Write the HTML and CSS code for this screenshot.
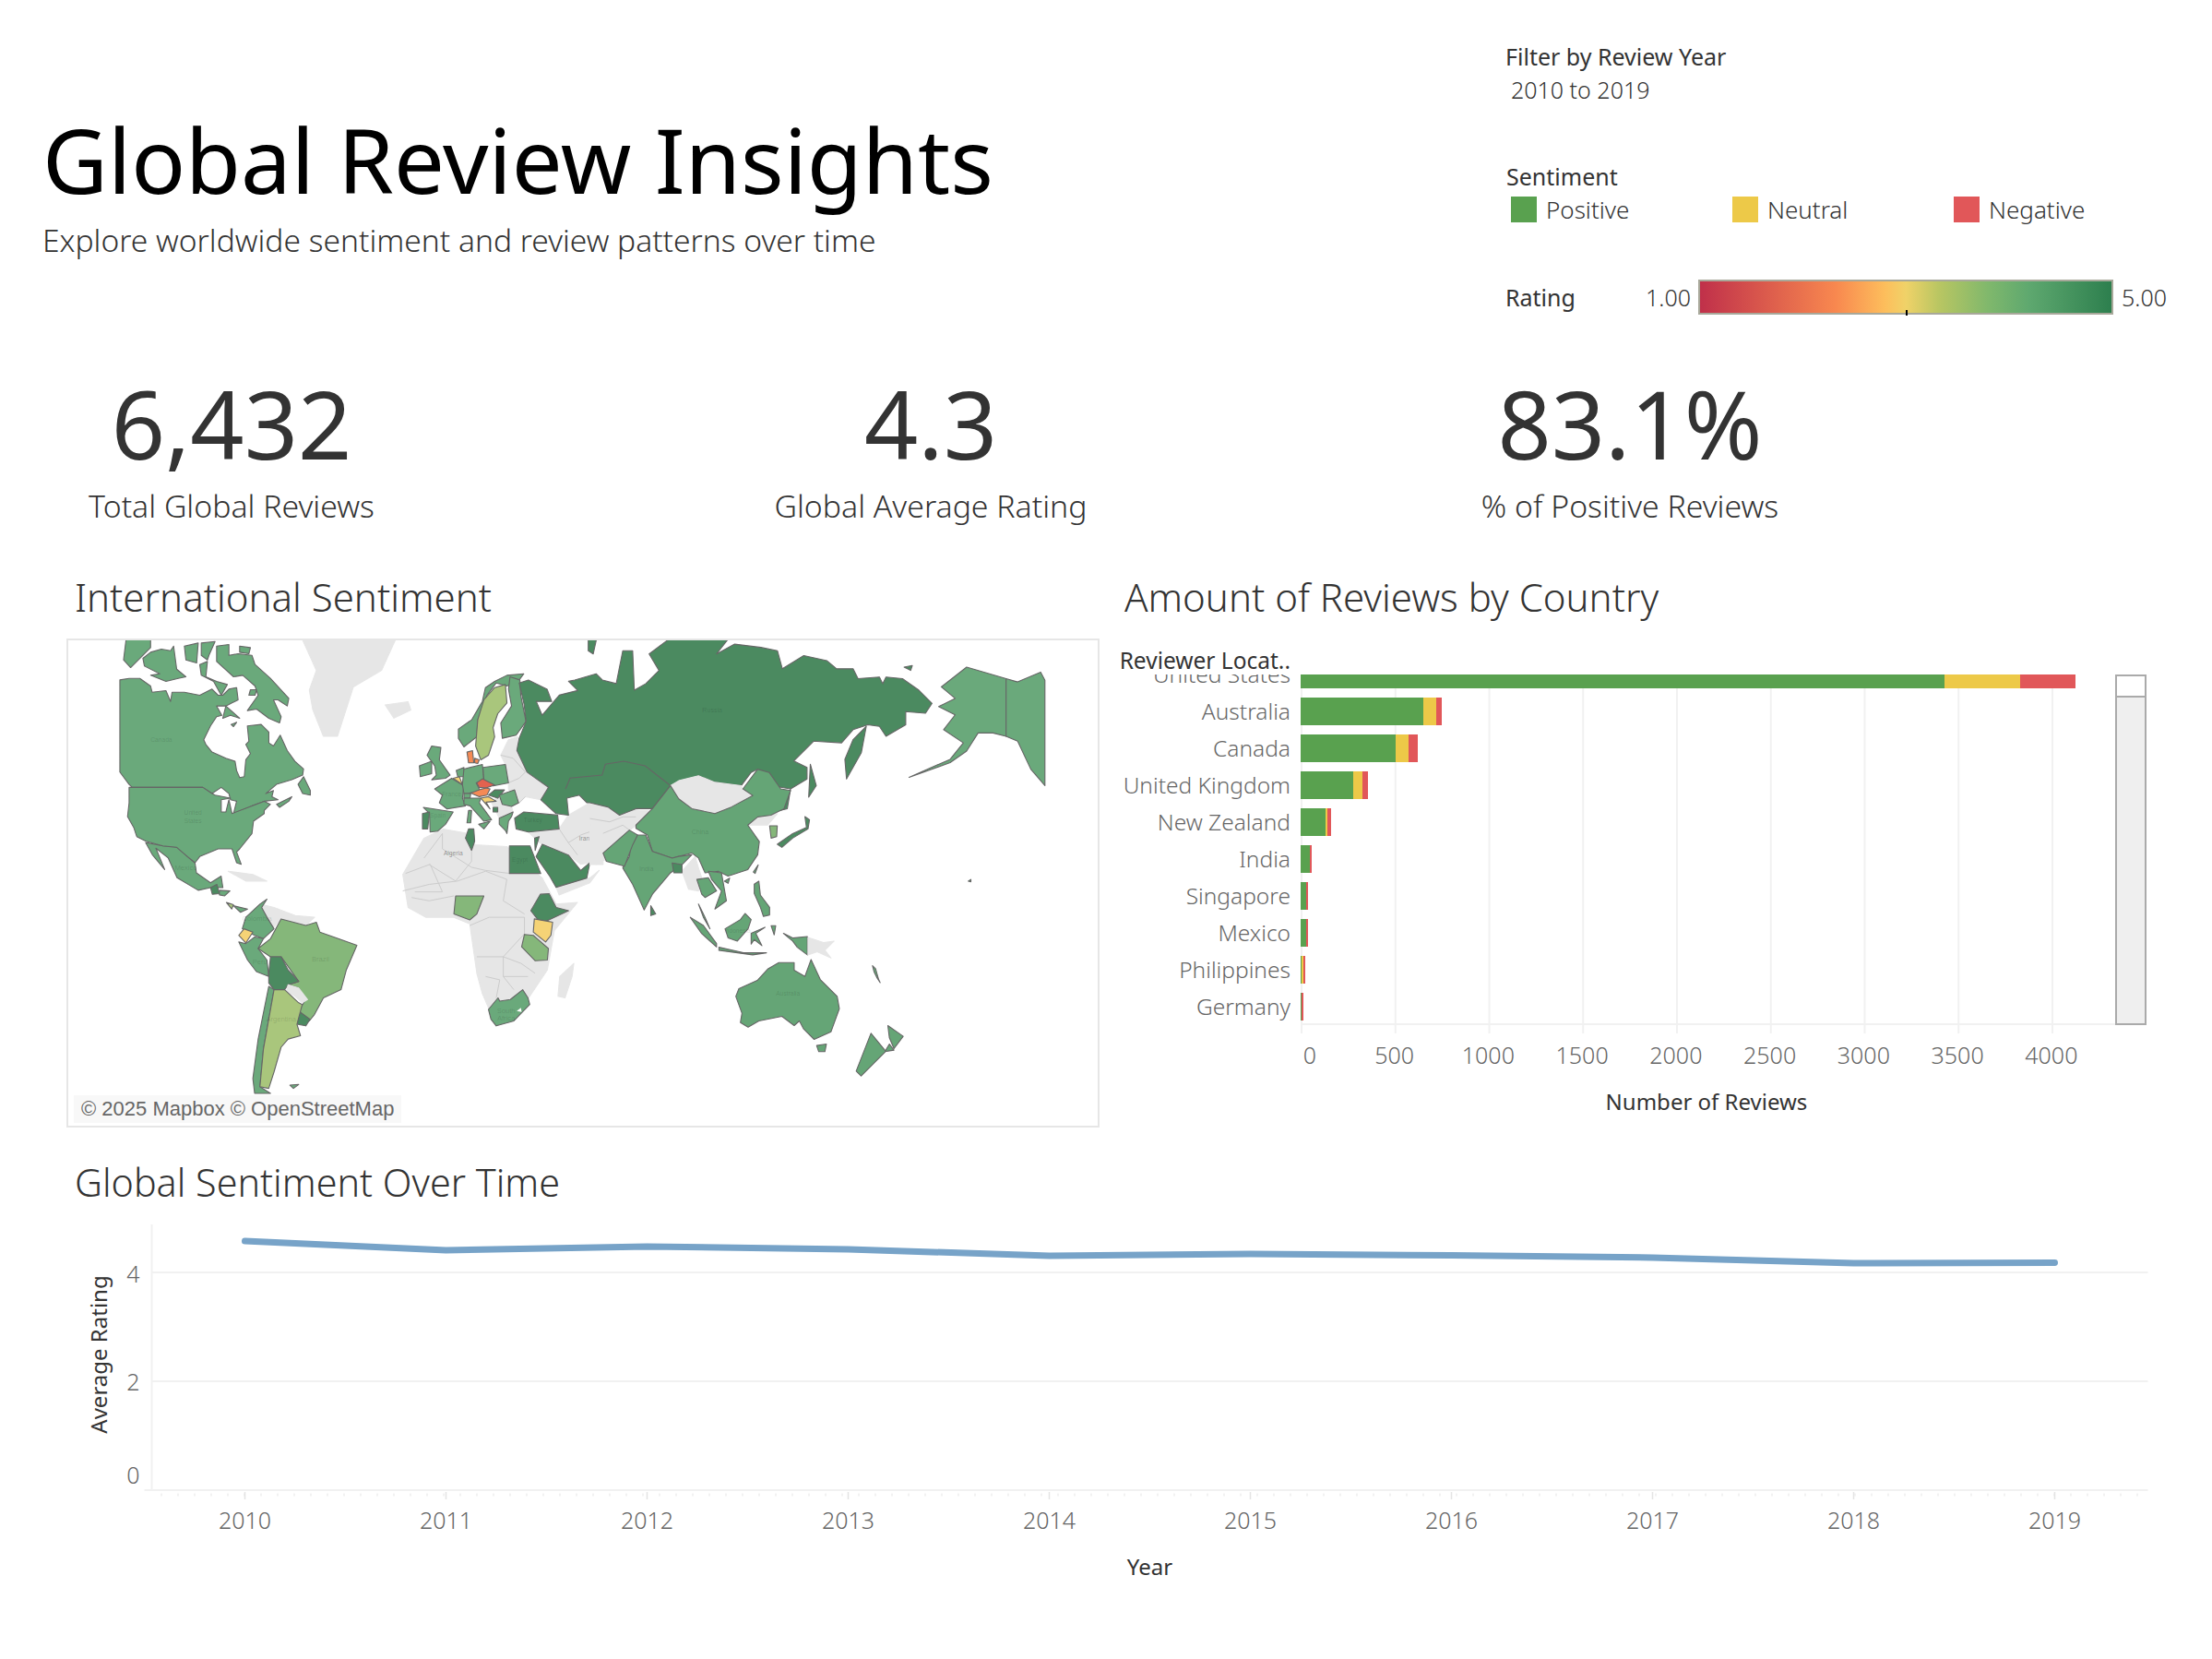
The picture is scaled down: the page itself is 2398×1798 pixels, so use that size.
FILE: index.html

```html
<!DOCTYPE html>
<html lang="en">
<head>
    <meta charset="UTF-8">
    <title>Global Review Insights</title>
    <link rel="stylesheet" href="styles.css">
</head>
<body>
<div class="dashboard">

    <header class="top">
        <div class="heading">
            <h1>Global Review Insights</h1>
            <p class="subtitle">Explore worldwide sentiment and review patterns over time</p>
        </div>
        <div class="filters">
            <div class="filter-title">Filter by Review Year</div>
            <div class="filter-value">2010 to 2019</div>
            <div class="filter-title legend-title">Sentiment</div>
            <div class="legend">
                <div class="legend-item"><span class="swatch pos"></span>Positive</div>
                <div class="legend-item"><span class="swatch neu"></span>Neutral</div>
                <div class="legend-item"><span class="swatch neg"></span>Negative</div>
            </div>
            <div class="rating">
                <div class="filter-title rating-label">Rating</div>
                <div class="rating-min">1.00</div>
                <div class="rating-bar"><span class="rating-tick"></span></div>
                <div class="rating-max">5.00</div>
            </div>
        </div>
    </header>

    <section class="kpis">
        <div class="kpi"><div class="kpi-value">6,432</div><div class="kpi-label">Total Global Reviews</div></div>
        <div class="kpi"><div class="kpi-value">4.3</div><div class="kpi-label">Global Average Rating</div></div>
        <div class="kpi"><div class="kpi-value">83.1%</div><div class="kpi-label">% of Positive Reviews</div></div>
    </section>

    <section class="middle">
        <div class="map-panel">
            <h2>International Sentiment</h2>
            <div class="map-frame">
                <svg class="map" viewBox="74 694 1117 526">
                    <!-- americas, africa -->
                    <g transform="matrix(.3827 0 0 .357 60 680)">
                        <polygon class="grey" points="700,35 965,35 925,130 845,180 800,330 760,330 730,250 720,190 740,130"/>
                        <polygon class="grey" points="935,235 1000,225 1008,250 960,275"/>
                        <polygon class="grey" points="985,750 1045,640 1100,612 1170,625 1190,660 1280,665 1380,760 1420,840 1480,835 1415,920 1395,1040 1345,1120 1320,1160 1230,1160 1210,1110 1195,1050 1175,900 1130,880 1050,880 1000,850"/>
                        <polygon class="grey" points="1425,1120 1430,1060 1470,1020 1465,1060 1445,1125"/>
                        <polygon class="grey" points="580,840 620,850 680,875 735,880 710,905 640,885 615,915 600,880"/>
                        <polygon class="grey" points="490,740 560,750 600,770 540,770"/>
                        <polyline class="line-grey" points="985,800 1060,780 1140,770 1220,740 1280,765 1270,830 1330,870"/>
                        <polyline class="line-grey" points="1060,720 1135,770 1180,710 1180,680"/>
                        <polyline class="line-grey" points="1010,820 1060,830 1130,815"/>
                        <polyline class="line-grey" points="1175,905 1230,880 1330,880 1330,930 1270,1000 1270,1060 1340,1060"/>
                        <polyline class="line-grey" points="1195,1000 1270,1000 1320,1020 1360,1050"/>
                        <polyline class="line-grey" points="1220,1060 1260,1070 1250,1125"/>
                        <polyline class="line-grey" points="1270,1060 1300,1100"/>

                        <polygon class="mid" points="256,653 305,663 344,666 374,695 396,715 400,745 440,775 470,755 475,790 440,790 405,798 345,760 320,700 285,670 310,735 275,690"/>
                        <polygon class="dark" points="440,790 458,780 465,808 445,810"/>
                        <polygon class="mid" points="465,798 495,800 480,815 465,812"/>
                        <polygon class="light" points="485,835 505,842 500,855"/>
                        <polygon class="mid" points="505,845 545,855 525,865"/>

                        <polygon class="mid" points="600,825 580,840 540,880 530,915 565,935 590,945 620,915 600,880 585,850"/>
                        <polygon class="yellow" points="520,935 535,915 560,925 540,958"/>
                        <polygon class="mid" points="520,955 540,960 565,940 590,945 575,975 600,1010 605,1060 570,1045 545,1010"/>
                        <polygon class="sa" points="575,975 610,945 640,885 710,905 740,895 750,925 855,965 825,1040 810,1100 760,1125 735,1175 720,1195 690,1165 710,1130 690,1095 660,1085 690,1075 640,1000 610,1000"/>
                        <polygon class="dark" points="610,1000 640,1000 660,1040 690,1075 660,1085 650,1100 620,1100 605,1080 605,1050"/>
                        <polygon class="grey" points="660,1085 690,1095 715,1130 700,1140 680,1120 655,1105"/>
                        <polygon class="dark" points="690,1165 722,1190 710,1210 685,1205"/>
                        <polygon class="mid" points="605,1090 620,1100 590,1280 580,1395 610,1415 565,1415 560,1370 575,1250"/>
                        <polygon class="light" points="620,1100 650,1100 690,1140 700,1145 685,1205 695,1240 660,1250 640,1275 620,1350 605,1400 580,1395 590,1280"/>
                        <polygon class="mid" points="665,1390 690,1388 675,1400"/>

                        <polygon class="sa" points="1135,815 1215,815 1195,870 1175,888 1130,870"/>
                        <polygon class="dark" points="1348,860 1375,810 1400,808 1420,850 1455,860 1395,890 1370,890"/>
                        <polygon class="yellow" points="1358,885 1395,892 1410,895 1405,935 1390,955 1355,925"/>
                        <polygon class="sa" points="1330,932 1355,935 1398,975 1395,1010 1360,1012 1322,970"/>
                        <polygon class="mid" points="1228,1160 1255,1125 1260,1135 1290,1130 1325,1100 1340,1125 1345,1145 1300,1195 1250,1210 1235,1190"/>
                        <polygon class="blank" points="1308,1165 1320,1155 1322,1168"/>

                        <text class="map-label" x="370" y="738">Mexico</text>
                        <text class="map-label" x="572" y="892">Colombia</text>
                        <text class="map-label" x="752" y="1014">Brazil</text>
                        <text class="map-label" x="580" y="1022">Peru</text>
                        <text class="map-label" x="640" y="1196">Argentina</text>
                        <text class="map-label" x="1278" y="1170">South</text>
                        <text class="map-label" x="1278" y="1194">Africa</text>
                    </g>
                    <!-- canada, usa -->
                    <g transform="translate(120 690) scale(.3333)">
                        <polygon class="mid" points="30,140 60,135 95,135 130,160 135,180 180,175 195,210 200,180 240,180 290,190 330,170 350,190 365,190 385,170 410,165 415,205 395,215 375,225 345,225 362,255 345,260 325,290 303,335 310,350 330,375 375,395 405,405 410,435 420,458 435,455 440,400 455,380 440,350 450,340 445,290 490,285 515,310 515,345 530,355 552,320 575,370 600,405 628,430 625,450 590,465 540,480 505,510 530,500 525,520 545,530 500,535 460,550 400,575 410,535 390,530 385,510 360,490 330,510 300,490 70,490 60,480 30,440"/>
                        <polygon class="mid" points="60,490 300,490 330,510 340,515 390,525 360,530 360,570 375,570 385,530 395,575 460,550 500,535 520,545 500,565 500,575 465,600 460,640 420,690 410,700 425,740 410,735 395,690 350,690 290,715 275,735 250,715 215,685 170,680 115,665 85,650 75,620 55,585 60,540"/>
                        <polygon class="mid" points="375,225 420,265 390,255 365,265"/>
                        <polygon class="mid" points="50,10 130,10 130,35 95,70 65,100 42,75"/>
                        <polygon class="mid" points="105,70 130,50 165,40 195,45 205,30 215,105 245,130 220,135 180,145 130,125 160,120 110,95"/>
                        <polygon class="mid" points="240,30 285,20 280,85 245,75"/>
                        <polygon class="mid" points="295,20 340,15 320,60 315,75 295,60"/>
                        <polygon class="mid" points="290,90 315,80 310,130 345,145 380,155 360,190 335,145 295,125"/>
                        <polygon class="mid" points="345,30 385,25 385,60 415,55 460,60 470,90 520,135 580,200 575,225 545,205 530,205 555,260 550,280 515,265 475,235 445,240 480,190 470,160 430,125 400,130 345,80"/>
                        <polygon class="mid" points="420,30 455,35 450,55 420,50"/>
                        <polygon class="mid" points="610,480 628,455 650,500 650,515 625,510"/>
                        <polygon class="mid" points="540,545 590,520 580,535 550,555"/>
                        <polygon class="mid" points="392,285 410,278 400,292"/>
                        <polygon class="mid" points="455,172 475,172 470,190 450,190"/>
                        <text class="map-label us" x="165" y="342">Canada</text>
                        <text class="map-label us" x="268" y="580">United</text>
                        <text class="map-label us" x="268" y="605">States</text>
                    </g>
                    <!-- europe, middle east -->
                    <g transform="translate(440 730) scale(.3333)">
                        <polygon class="grey" points="310,265 335,215 365,205 362,250 395,320 465,370 440,410 390,400 370,420 335,375 335,355 325,295"/>
                        <polygon class="grey" points="280,420 305,395 345,432 350,450 305,470"/>
                        <polygon class="grey" points="400,515 500,505 530,460 600,420 700,450 750,440 780,460 780,470 735,505 645,580 650,605 620,620 600,615 570,620 530,590 445,555 430,545"/>
                        <polygon class="grey" points="490,695 600,665 630,640 600,680 500,720"/>
                        <polyline class="line-grey" points="310,265 350,275 390,320 370,340 335,355"/>
                        <polyline class="line-grey" points="345,432 370,420 390,400"/>
                        <polyline class="line-grey" points="500,505 530,550 570,525 640,500 700,480 735,505"/>
                        <polyline class="line-grey" points="530,550 560,590"/>
                        <polyline class="line-grey" points="640,500 640,570"/>
                        <polyline class="line-grey" points="60,600 120,520 120,570 215,630 260,640 340,650"/>
                        <polyline class="line-grey" points="0,650 80,620 120,710 30,710"/>

                        <polygon class="mid" points="172,180 215,150 250,90 260,45 290,25 330,5 385,0 370,20 330,40 295,30 265,70 235,150 232,205 190,238 172,210"/>
                        <polygon class="light" points="325,35 330,95 300,130 285,175 290,205 270,265 245,280 228,235 235,150 255,85 290,45"/>
                        <polygon class="mid" points="340,10 372,20 375,70 392,155 360,200 315,210 310,160 345,105 335,50"/>
                        <polygon class="orange" points="200,255 218,250 222,290 205,290"/>
                        <polygon class="orange" points="225,275 240,280 235,292 225,290"/>
                        <polygon class="mid" points="85,235 115,240 110,280 145,330 130,340 85,345 100,330 95,300 70,265"/>
                        <polygon class="mid" points="45,300 85,285 85,325 48,335"/>
                        <polygon class="mid" points="95,375 150,340 190,365 185,405 195,430 135,440 110,420 120,395"/>
                        <polygon class="yellow" points="155,340 175,335 185,360"/>
                        <polygon class="mid" points="165,315 190,305 190,335 170,335"/>
                        <polygon class="mid" points="190,310 250,295 255,345 230,355 245,385 190,390 185,360"/>
                        <polygon class="mid" points="252,305 325,295 335,355 285,365 255,345"/>
                        <polygon class="red" points="232,355 250,342 290,362 262,372 240,370"/>
                        <polygon class="orange" points="212,388 240,378 262,372 275,375 265,395 240,400"/>
                        <polygon class="dark" points="270,395 290,378 322,378 300,405"/>
                        <polygon class="mid" points="190,390 212,390 210,405 190,405"/>
                        <polygon class="yellow" points="245,405 270,400 295,415 262,418 275,440"/>
                        <polygon class="mid" points="190,405 245,405 240,420 280,475 255,480 210,430 190,425"/>
                        <polygon class="mid" points="238,490 275,480 255,505"/>
                        <polygon class="mid" points="205,445 215,445 212,485 200,485"/>
                        <polygon class="mid" points="305,395 355,378 368,420 345,432 315,425"/>
                        <polygon class="dark" points="285,435 300,435 300,450 285,450"/>
                        <polygon class="mid" points="58,435 155,450 130,490 105,512 80,515 78,455"/>
                        <polygon class="dark" points="55,455 78,450 72,505 55,505"/>
                        <polygon class="mid" points="305,470 350,450 345,465 335,480 330,520 325,510 305,490"/>
                        <polygon class="dark" points="355,470 385,450 495,460 500,505 400,515 360,505"/>
                        <polygon class="dark" points="205,505 222,505 225,545 215,575 195,535"/>
                        <polygon class="dark" points="338,560 405,560 440,650 338,650"/>
                        <polygon class="dark" points="420,535 435,530 422,575"/>
                        <polygon class="dark" points="425,595 445,555 530,590 570,640 600,615 590,665 490,695 470,660"/>
                        <text class="map-label us" x="150" y="398">France</text>
                        <text class="map-label us" x="105" y="468">Spain</text>
                        <text class="map-label us" x="415" y="484">Turkey</text>
                        <text class="map-label grey-label" x="582" y="542">Iran</text>
                        <text class="map-label grey-label" x="155" y="590">Algeria</text>
                        <text class="map-label us" x="372" y="612">Egypt</text>
                    </g>
                    <!-- russia, asia, alaska -->
                    <g transform="matrix(.357 0 0 .357 640 680)">
                        <polygon class="grey" points="0,525 55,545 90,570 140,555 185,555 140,600 120,615 40,680 40,720 0,720"/>
                        <polygon class="grey" points="280,740 320,695 330,730 340,760 330,800 300,795"/>
                        <polygon class="grey" points="480,600 510,575 570,565 540,600"/>
                        <polyline class="line-grey" points="0,580 60,590 100,575 140,575"/>
                        <polyline class="line-grey" points="40,625 100,600 120,615"/>
                        <polygon class="dark" points="-215,168 -187,159 -130,187 -116,224 -163,224 -145,266 -93,205 -37,191 -65,163 -46,159 19,140 38,159 80,170 100,70 130,70 135,190 170,170 210,130 180,80 240,35 420,35 385,80 440,50 520,60 570,70 585,125 650,85 720,100 750,125 800,125 815,155 880,150 890,170 900,150 950,155 1000,190 1040,230 1020,260 960,255 960,295 900,330 880,300 845,295 800,310 765,350 680,345 620,405 660,425 660,460 610,490 600,550 580,555 610,490 550,480 510,430 490,440 460,480 380,470 330,450 245,480 190,550 140,550 90,570 55,545 0,532 -9,532 -32,509 -70,518 -65,570 -103,565 -149,523 -126,485 -191,439 -222,373 -215,336 -194,285 -200,233"/>
                        <polyline class="edge" points="-74,490 -60,457 37,448 47,415 103,406 168,420 245,480"/>
                        <polygon class="dark" points="-5,35 20,35 10,80 -5,70"/>
                        <polygon class="dark" points="775,400 800,340 840,300 825,380 780,460"/>
                        <polygon class="dark" points="670,415 688,480 665,515"/>
                        <polygon class="dark" points="955,120 980,115 975,130"/>
                        <polygon class="grey" points="245,480 270,465 330,450 380,470 460,480 465,495 495,510 430,545 380,565 310,550 270,520"/>
                        <polygon class="asia" points="140,600 190,550 245,480 270,520 310,550 380,565 430,545 495,510 465,490 510,430 545,440 580,490 610,495 590,550 550,570 510,575 480,600 515,650 510,690 480,735 420,755 390,740 350,745 330,700 310,685 250,700 190,680 175,630 140,610"/>
                        <polygon class="asia" points="145,630 170,630 190,680 250,700 270,695 310,690 280,720 245,745 190,810 165,858 130,780 100,730 120,695 125,660"/>
                        <polygon class="asia" points="40,685 120,615 145,630 130,660 105,725 50,710"/>
                        <polygon class="dark" points="250,715 280,720 280,745 255,745"/>
                        <polygon class="dark" points="185,845 200,870 185,875"/>
                        <polygon class="asia" points="325,765 360,760 385,800 350,820 340,810"/>
                        <polygon class="asia" points="360,740 400,745 415,830 380,855 400,800 370,765"/>
                        <polygon class="asia" points="330,840 345,880 365,915 350,880"/>
                        <polygon class="asia" points="305,880 345,905 385,960 385,970 340,930"/>
                        <polygon class="mid" points="1068,180 1145,120 1265,155 1265,330 1225,320 1180,320 1145,375 1095,410 970,455 1095,400 1135,350 1075,310 1110,265 1060,240 1110,215"/>
                        <polygon class="mid" points="1265,155 1300,165 1370,135 1383,160 1383,480 1340,430 1300,345 1265,330"/>
                        <polygon class="mid" points="1150,770 1158,765 1158,772"/>
                        <text class="map-label us" x="372" y="256">Russia</text>
                        <text class="map-label us" x="335" y="628">China</text>
                        <text class="map-label us" x="172" y="740">India</text>
                    </g>
                    <!-- oceania -->
                    <g transform="translate(780 880) scale(.3333)">
                        <polygon class="asia" points="55,600 65,575 125,548 160,510 195,490 245,490 245,515 280,535 300,480 330,545 385,600 392,640 365,715 310,740 275,705 262,680 245,695 205,665 130,680 95,700 70,685 75,655"/>
                        <polygon class="asia" points="318,760 350,755 345,780 325,780"/>
                        <polygon class="asia" points="20,380 70,350 85,330 105,350 95,380 60,420 30,410"/>
                        <polygon class="asia" points="105,395 150,375 120,395 140,435 115,415 105,430"/>
                        <polygon class="asia" points="210,395 240,410 288,405 288,465 255,440 240,420"/>
                        <polygon class="grey" points="290,408 340,425 375,420 345,450 365,475 320,455 290,465"/>
                        <polygon class="asia" points="0,440 80,458 155,458 110,465 0,450"/>
                        <polygon class="asia" points="115,235 130,225 135,270 165,310 165,335 145,340 135,310 115,265"/>
                        <polygon class="asia" points="112,195 128,172 118,200"/>
                        <polygon class="asia" points="18,225 35,215 30,232"/>
                        <polygon class="sa" points="165,45 190,45 188,80 170,85"/>
                        <polygon class="dark" points="190,105 240,70 285,50 280,15 295,25 290,55 240,85 205,115"/>
                        <polygon class="asia" points="500,500 510,510 520,545 525,555 515,540 505,520"/>
                        <polygon class="asia" points="170,370 185,370 180,400"/>
                        <polygon class="asia" points="550,695 600,730 570,770 555,735"/>
                        <polygon class="asia" points="555,755 570,775 540,780"/>
                        <text class="map-label us" x="225" y="598">Australia</text>
                        <text class="map-label us" x="60" y="392">Indonesia</text>
                    </g>
                    <g transform="translate(945 1120) scale(.357)">
                        <polygon class="asia" points="0,0 45,55 -30,130 -45,115"/>
                    </g>
                </svg>
                <div class="attribution">© 2025 Mapbox © OpenStreetMap</div>
            </div>
        </div>

        <div class="bars-panel">
            <h2>Amount of Reviews by Country</h2>
            <div class="bars-head">Reviewer Locat..</div>
            <div class="bars-body">
                <div class="bars-labels">
                    <div class="bars-inner">
                        <div class="row-label">United States</div>
                        <div class="row-label">Australia</div>
                        <div class="row-label">Canada</div>
                        <div class="row-label">United Kingdom</div>
                        <div class="row-label">New Zealand</div>
                        <div class="row-label">India</div>
                        <div class="row-label">Singapore</div>
                        <div class="row-label">Mexico</div>
                        <div class="row-label">Philippines</div>
                        <div class="row-label">Germany</div>
                    </div>
                </div>
                <div class="bars-plot">
                    <div class="bars-inner">
                        <div class="bar-row"><span class="seg pos" style="width:697.5px"></span><span class="seg neu" style="width:82px"></span><span class="seg neg" style="width:60px"></span></div>
                        <div class="bar-row"><span class="seg pos" style="width:133px"></span><span class="seg neu" style="width:14px"></span><span class="seg neg" style="width:6px"></span></div>
                        <div class="bar-row"><span class="seg pos" style="width:103px"></span><span class="seg neu" style="width:14px"></span><span class="seg neg" style="width:10px"></span></div>
                        <div class="bar-row"><span class="seg pos" style="width:57px"></span><span class="seg neu" style="width:10px"></span><span class="seg neg" style="width:6px"></span></div>
                        <div class="bar-row"><span class="seg pos" style="width:27px"></span><span class="seg neu" style="width:2px"></span><span class="seg neg" style="width:4px"></span></div>
                        <div class="bar-row"><span class="seg pos" style="width:10px"></span><span class="seg neg" style="width:1.5px"></span></div>
                        <div class="bar-row"><span class="seg pos" style="width:5.5px"></span><span class="seg neg" style="width:2px"></span></div>
                        <div class="bar-row"><span class="seg pos" style="width:5.5px"></span><span class="seg neg" style="width:2px"></span></div>
                        <div class="bar-row"><span class="seg pos" style="width:.8px"></span><span class="seg neu" style="width:2.7px"></span><span class="seg neg" style="width:1.5px"></span></div>
                        <div class="bar-row"><span class="seg pos" style="width:.8px"></span><span class="seg neg" style="width:2.4px"></span></div>
                    </div>
                </div>
                <div class="scrollbar"><div class="scroll-thumb"></div></div>
            </div>
            <div class="bars-ticks"></div>
            <div class="bars-axis">
                <span>0</span><span>500</span><span>1000</span><span>1500</span><span>2000</span><span>2500</span><span>3000</span><span>3500</span><span>4000</span>
            </div>
            <div class="bars-title">Number of Reviews</div>
        </div>
    </section>

    <section class="trend">
        <h2>Global Sentiment Over Time</h2>
        <svg class="trend-chart" viewBox="-1.5 1310 2398 410">
            <line class="grid" x1="163" y1="1326" x2="163" y2="1614"/>
            <line class="grid" x1="163" y1="1378" x2="2327" y2="1378"/>
            <line class="grid" x1="163" y1="1496" x2="2327" y2="1496"/>
            <line class="grid" x1="155" y1="1614" x2="2327" y2="1614"/>
            <line class="minor" x1="173" y1="1619" x2="2327" y2="1619"/>
            <path class="tick" d="M264 1616v8M482 1616v8M700 1616v8M918 1616v8M1136 1616v8M1354 1616v8M1572 1616v8M1790 1616v8M2008 1616v8M2226 1616v8"/>
            <polyline class="trend-line" points="264,1344 482,1354 700,1350 918,1353 1136,1360 1354,1358 1572,1359.5 1790,1362 2008,1368 2226,1367.5"/>
            <text class="y-tick" x="150" y="1389">4</text>
            <text class="y-tick" x="150" y="1506">2</text>
            <text class="y-tick" x="150" y="1607">0</text>
            <text class="axis-name" transform="translate(114 1467) rotate(-90)">Average Rating</text>
            <text class="x-tick" x="264" y="1656">2010</text>
            <text class="x-tick" x="482" y="1656">2011</text>
            <text class="x-tick" x="700" y="1656">2012</text>
            <text class="x-tick" x="918" y="1656">2013</text>
            <text class="x-tick" x="1136" y="1656">2014</text>
            <text class="x-tick" x="1354" y="1656">2015</text>
            <text class="x-tick" x="1572" y="1656">2016</text>
            <text class="x-tick" x="1790" y="1656">2017</text>
            <text class="x-tick" x="2008" y="1656">2018</text>
            <text class="x-tick" x="2226" y="1656">2019</text>
            <text class="axis-name" x="1245" y="1706">Year</text>
        </svg>
    </section>
</div>
</body>
</html>
```

FILE: styles.css

```css
* { box-sizing: border-box; }
body {
    margin: 0;
    background: #fff;
    color: #333;
    font-family: "Noto Sans", "Open Sans", sans-serif;
}
h1, h2, p { margin: 0; font-weight: normal; }

.dashboard { width: 2398px; height: 1798px; overflow: hidden; }

/* header */
.top { display: flex; justify-content: space-between; height: 395px; }
.heading { padding: 123px 0 0 46px; }
h1 { font-size: 97.5px; line-height: 100px; color: #000; }
.subtitle { font-size: 33.6px; font-weight: 300; line-height: 40px; margin-top: 17px; }

.filters { width: 766px; padding-top: 45px; }
.filter-title { font-size: 25px; line-height: 32px; }
.filter-value { font-size: 25px; font-weight: 300; line-height: 32px; margin: 4px 0 0 6px; }
.legend-title { margin: 62px 0 0 1px; }
.legend { display: flex; margin: 5px 0 0 6px; }
.legend-item { width: 240px; display: flex; align-items: center; font-size: 26px; font-weight: 300; line-height: 30px; }
.swatch { width: 28px; height: 28px; margin-right: 10px; }
.pos { background: #59a14f; }
.neu { background: #edc948; }
.neg { background: #e15759; }

.rating { display: flex; align-items: center; margin-top: 61px; height: 38px; }
.rating-label { width: 150px; }
.rating-min { width: 51px; text-align: right; font-size: 25px; font-weight: 300; }
.rating-max { margin-left: 9px; font-size: 25px; font-weight: 300; }
.rating-bar {
    position: relative;
    width: 450px;
    height: 38px;
    margin-left: 8px;
    border: 2px solid #a8a89a;
    background: linear-gradient(to right, #c0304a, #f8884f 33%, #fdbe5c 45%, #f0d268 50%, #b9c662 58%, #80b86c 70%, #5ea86f 80%, #2d7f4e);
}
.rating-tick { position: absolute; left: 50%; bottom: -3px; width: 2px; height: 6px; background: #000; }

/* kpis */
.kpis { display: grid; grid-template-columns: repeat(3, 502px); column-gap: 256px; height: 225px; padding-top: 9px; text-align: center; }
.kpi-value { font-size: 102px; line-height: 110px; }
.kpi-label { font-size: 33.8px; font-weight: 300; line-height: 40px; margin-top: 14px; }

/* middle row */
h2 { font-size: 42px; font-weight: 300; line-height: 50px; }
.middle { display: flex; height: 636px; }
.map-panel { width: 1213px; padding-left: 72px; }
.map-panel h2 { padding: 2px 0 0 9px; }
.map-frame { position: relative; width: 1120px; height: 530px; margin-top: 20px; border: 2px solid #e6e6e6; }
.map { display: block; width: 100%; height: 100%; }
.map polygon { stroke: #666; stroke-width: 1.1; stroke-linejoin: round; vector-effect: non-scaling-stroke; }
.map .grey { fill: #e6e6e6; stroke: #e6e6e6; }
.map .blank { fill: #fff; stroke: none; }
.line-grey { fill: none; stroke: #ccc; stroke-width: 1; vector-effect: non-scaling-stroke; }
.edge { fill: none; stroke: #666; stroke-width: 1.1; vector-effect: non-scaling-stroke; }
.dark { fill: #4b8a60; }
.mid { fill: #6aa97b; }
.asia { fill: #65a576; }
.sa { fill: #85b77a; }
.light { fill: #a9c67c; }
.yellow { fill: #f5d376; }
.orange { fill: #f58a55; }
.red { fill: #e2624f; }
.map-label { font-family: "Liberation Sans", sans-serif; font-size: 20px; fill: #000; fill-opacity: .14; text-anchor: middle; }
.grey-label { fill-opacity: .4; }
.attribution {
    position: absolute;
    left: 6px;
    bottom: 3px;
    padding: 0 8px;
    background: #f8f8f8;
    color: #666;
    font-family: "Liberation Sans", sans-serif;
    font-size: 22px;
    line-height: 30px;
}

/* bars */
.bars-panel { width: 1185px; }
.bars-panel h2 { padding: 2px 0 0 6px; }
.bars-head { width: 186px; margin-top: 29px; text-align: right; font-size: 24.5px; line-height: 30px; white-space: nowrap; }
.bars-body { display: flex; height: 380px; }
.bars-labels { width: 186px; margin-right: 11px; height: 380px; overflow: hidden; }
.bars-inner { margin-top: -20px; }
.row-label { height: 40px; line-height: 40px; text-align: right; font-size: 24.5px; font-weight: 300; color: #666; white-space: nowrap; }
.bars-plot {
    width: 883px;
    height: 380px;
    overflow: hidden;
    border-bottom: 2px solid #f1f1f1;
    background: linear-gradient(to right, #f1f1f1 2px, transparent 2px) 0 0 / 101.75px 100%;
}
.bar-row { display: flex; height: 30px; margin: 5px 0 10px; }
.bar-row + .bar-row { margin-top: 0; }
.seg { display: block; height: 100%; }
.scrollbar { width: 34px; height: 380px; padding-top: 21px; border: 2px solid #aaa; background: #fff; }
.scroll-thumb { height: 100%; border-top: 2px solid #aaa; background: #efefef; }
.bars-ticks {
    width: 816px;
    height: 9px;
    margin-left: 197px;
    background: linear-gradient(to right, #f1f1f1 2px, transparent 2px) 0 0 / 101.75px 100%;
}
.bars-axis { display: flex; margin: 0 0 0 146px; font-size: 25px; font-weight: 300; line-height: 30px; color: #666; padding-top: 8px; }
.bars-axis span { width: 101.75px; text-align: center; }
.bars-axis span:first-child { padding-left: 20px; }
.bars-title { width: 1274px; text-align: center; font-size: 24px; line-height: 30px; margin-top: 21px; }

/* trend */
.trend { height: 450px; padding: 0 0 0 81px; }
.trend h2 { font-size: 41.3px; margin-bottom: 4.5px; }
.trend-chart { display: block; width: 2398px; height: 410px; margin-left: -81px; }
.trend-chart .grid { stroke: #f1f1f1; stroke-width: 2; }
.minor { stroke: #e6e6e6; stroke-width: 3; stroke-dasharray: 1 17; }
.tick { stroke: #e4e4e4; stroke-width: 1.5; fill: none; }
.trend-line { fill: none; stroke: #77a3c8; stroke-width: 7; stroke-linejoin: round; stroke-linecap: round; }
.y-tick { font-size: 25px; font-weight: 300; fill: #666; text-anchor: end; }
.x-tick { font-size: 25px; font-weight: 300; fill: #666; text-anchor: middle; }
.axis-name { font-size: 24px; fill: #333; text-anchor: middle; }
```
